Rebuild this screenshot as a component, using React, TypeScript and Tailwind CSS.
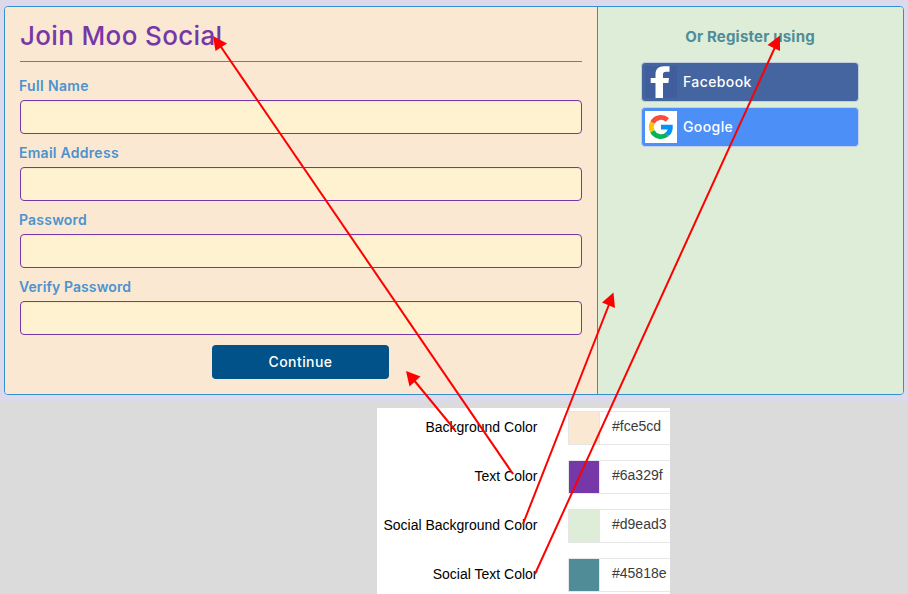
const fields = [
  { label: 'Full Name', spacing: 'tracking-[0.35px]' },
  { label: 'Email Address', spacing: 'tracking-[0.27px]' },
  { label: 'Password', spacing: 'tracking-[0.2px]' },
  { label: 'Verify Password', spacing: 'tracking-[0.1px]' },
];

const colors = [
  { name: 'Background Color', value: '#fce5cd', swatch: 'bg-[#fbe8d3]' },
  { name: 'Text Color', value: '#6a329f', swatch: 'bg-[#7637a8]' },
  { name: 'Social Background Color', value: '#d9ead3', swatch: 'bg-[#deedd8]' },
  { name: 'Social Text Color', value: '#45818e', swatch: 'bg-[#508c98]' },
];

const arrows = [
  { x1: 455, y1: 430, x2: 413, y2: 379, head: '406,371 420.5,376.5 409.5,386.5' },
  { x1: 513, y1: 474, x2: 219, y2: 44, head: '213,36 227,43.5 215.5,51' },
  { x1: 523, y1: 524, x2: 610, y2: 302, head: '613.5,292.5 602,302.5 615,308' },
  { x1: 535, y1: 574, x2: 776, y2: 45, head: '780,35.5 767.5,45 780,51' },
];

function FacebookIcon() {
  return (
    <svg viewBox="0 0 32 32" className="h-8 w-8">
      <rect width="32" height="32" fill="#405d9d" />
      <path d="M10.5 32V17H5.7V12H10.5V8.5C10.5 3 13.5 0.2 19 0.2H24.5V5.8H21C18.8 5.8 18 6.8 18 8.6V12H24L23.4 17H18V32Z" fill="#fff" />
    </svg>
  );
}

function GoogleIcon() {
  return (
    <svg viewBox="0 0 32 32" className="h-8 w-8" fill="none" strokeWidth="4.8">
      <rect width="32" height="32" fill="#fff" />
      <path d="M7.4 11.6A9.6 9.6 0 0 1 22.4 8.9" stroke="#fb4a3e" />
      <path d="M7.4 20.4A9.6 9.6 0 0 1 7.4 11.6" stroke="#fbc400" />
      <path d="M22 23.5A9.6 9.6 0 0 1 7.4 20.4" stroke="#08b457" />
      <path d="M16 13.7H27.7C28.3 18.5 26.8 22.6 23.8 25.1L20 22C21.5 21 22.3 20 22.6 18.6H16Z" fill="#0793f6" stroke="none" />
    </svg>
  );
}

export default function App() {
  return (
    <div className="relative h-[594px] w-[908px] overflow-hidden bg-[#dbdbdb] font-['Inter',sans-serif]">
      <div className="h-[401px] bg-[#ddd9ec] pt-[6px] pl-1">
        <main className="flex h-[389px] w-[900px] overflow-hidden rounded-[4px] border border-[#3490cc]">
          <section className="w-[593px] border-r border-[#3490cc] bg-[#fbe8d3] pl-[15px]">
            <h1 className="flex h-[55px] w-[562px] items-center border-b border-[#3490cc] pt-[3px] text-[26px] font-medium tracking-[0.35px] text-[#7637a8]">
              Join Moo Social
            </h1>
            <form className="w-[562px] pt-[13px]">
              {fields.map((field) => (
                <label key={field.label} className="block h-[67px]">
                  <span className={`-ml-px block h-[25px] text-sm leading-[21px] font-semibold text-[#4b93ce] ${field.spacing}`}>{field.label}</span>
                  <input className="block h-[34px] w-full rounded-[4px] border border-[#7637a8] bg-[#fff2d0] px-2 shadow-[inset_0_1px_1px_#0000000a]" />
                </label>
              ))}
              <button type="button" className="mt-[2px] ml-[192px] block h-[34px] w-[177px] rounded-[4px] bg-[#005288] text-sm font-medium tracking-[0.45px] text-white">
                Continue
              </button>
            </form>
          </section>
          <section className="flex flex-1 flex-col items-center bg-[#deedd8] pt-[18px] pr-px">
            <h2 className="h-[37px] text-[15px] leading-6 font-bold tracking-[0.2px] text-[#508c98]">Or Register using</h2>
            <div className="flex flex-col gap-[5px]">
              <button type="button" className="flex h-10 w-[218px] items-center gap-[6px] rounded-[4px] border border-[#c4cce0] bg-[#4565a1] pl-[3px] text-sm font-medium text-white">
                <FacebookIcon />
                <span className="tracking-[0.4px]">Facebook</span>
              </button>
              <button type="button" className="flex h-10 w-[218px] items-center gap-[6px] rounded-[4px] border border-[#c4d0e8] bg-[#4b8ff7] pl-[3px] text-sm font-medium text-white">
                <GoogleIcon />
                <span className="tracking-[0.4px]">Google</span>
              </button>
            </div>
          </section>
        </main>
      </div>

      <aside className="mt-[7px] ml-[377px] flex w-[293px] flex-col gap-[15px] bg-white pt-[3px] pb-3 font-['Liberation_Sans',sans-serif] text-sm">
        {colors.map((color) => (
          <div key={color.name} className="flex h-[34px]">
            <span className="w-[160.5px] text-right leading-[32px] whitespace-nowrap text-black">{color.name}</span>
            <div className="ml-[30.5px] flex flex-1 border-y border-l border-[#e6e6e6]">
              <div className={`w-[31px] border-r border-[#e6e6e6] ${color.swatch}`} />
              <span className="ml-3 leading-[29px] text-[#3b3b3b]">{color.value}</span>
            </div>
          </div>
        ))}
      </aside>

      <svg className="pointer-events-none absolute inset-0" width="908" height="594" viewBox="0 0 908 594">
        {arrows.map((arrow) => (
          <g key={arrow.head} fill="#fe0000" stroke="#fe0000">
            <line x1={arrow.x1} y1={arrow.y1} x2={arrow.x2} y2={arrow.y2} strokeWidth="2" />
            <polygon points={arrow.head} stroke="none" />
          </g>
        ))}
      </svg>
    </div>
  );
}
